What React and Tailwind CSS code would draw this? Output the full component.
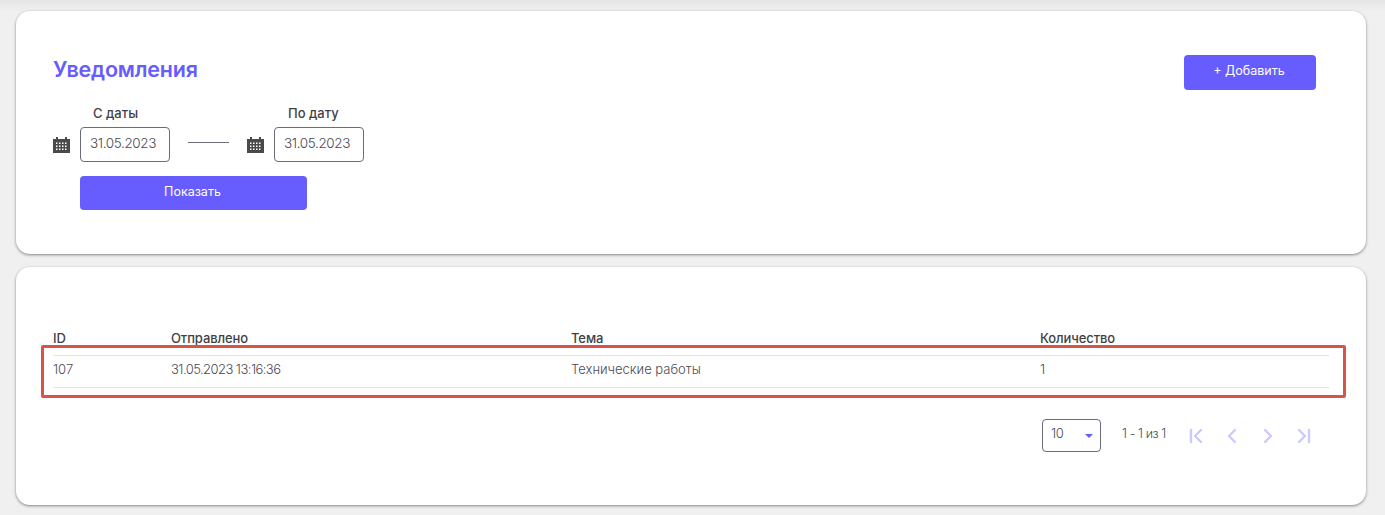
import { ChevronFirst, ChevronLast, ChevronLeft, ChevronRight } from "lucide-react";

const font = { fontFamily: '"Inter", "Noto Sans", sans-serif' };

function CalendarIcon() {
  return (
    <svg width="17" height="16" viewBox="0 0 17 16" className="shrink-0">
      <path fill="#4a4a4a" d="M0 2h3V0h2v2h7V0h2v2h3v14H0z" />
      <g fill="#fff">
        {[5.5, 8.5, 11.5].map((y) =>
          [3, 6, 9, 12].map((x) => <rect key={`${x}-${y}`} x={x} y={y} width="1.5" height="1.5" />)
        )}
      </g>
    </svg>
  );
}

function DateField({ label, labelClass }) {
  return (
    <div className="flex flex-col">
      <div className={`h-[21px] text-[13px] font-medium leading-[14px] text-[#3f3f46] ${labelClass}`}>{label}</div>
      <div className="flex h-[35px] w-[90px] items-center justify-center rounded-[4px] border border-[#6b6b7b] pb-[2px] pr-[4px] text-[13.5px] font-light tracking-[-0.4px] text-[#4a4a55]">
        31.05.2023
      </div>
    </div>
  );
}

export default function App() {
  return (
    <div style={font} className="relative flex h-[515px] flex-col gap-[13px] overflow-hidden bg-[#f0f0f0] bg-gradient-to-b from-[#e6e6e6] to-[#f0f0f0] to-[12px] pl-[16px] pr-[19px] pt-[11px]">
      {/* Filter card */}
      <div className="flex h-[243px] shrink-0 items-start justify-between rounded-[14px] bg-white pl-[37px] pr-[50px] pt-[44px] shadow-[0_1px_3px_rgba(0,0,0,0.45)]">
        <div>
          <h1 className="text-[21.5px] font-semibold leading-[28px] tracking-[-0.2px] text-[#675dff]">Уведомления</h1>
          <div className="mt-[23px] flex items-end">
            <div className="flex h-[35px] w-[27px] items-center"><CalendarIcon /></div>
            <DateField label="С даты" labelClass="pl-[13px]" />
            <div className="mx-[18px] mb-[19px] h-px w-[41px] bg-[#6b6b7b]" />
            <div className="flex h-[35px] w-[27px] items-center"><CalendarIcon /></div>
            <DateField label="По дату" labelClass="pl-[14px]" />
          </div>
          <button className="ml-[27px] mt-[14px] block h-[34px] w-[227px] rounded-[4px] bg-[#675dff] pb-[2px] pr-[2px] text-[12.5px] text-white">Показать</button>
        </div>
        <button className="h-[35px] w-[132px] rounded-[4px] bg-[#675dff] pb-[2px] pr-[2px] text-[12.5px] text-white">+ Добавить</button>
      </div>

      {/* Table card */}
      <div className="relative h-[238px] shrink-0 rounded-[14px] bg-white pl-[37px] pr-[37px] pt-[63px] shadow-[0_1px_3px_rgba(0,0,0,0.45)]">
        <div className="grid h-[26px] grid-cols-[118px_400px_469px_1fr] items-start border-b border-[#e2e2e2] text-[13px] font-medium leading-[16px] tracking-[-0.1px] text-[#3f3f46]">
          <div>ID</div>
          <div>Отправлено</div>
          <div>Тема</div>
          <div>Количество</div>
        </div>
        <div className="grid h-[32px] grid-cols-[118px_400px_469px_1fr] items-start border-b border-[#e2e2e2] pt-[5px] text-[13px] font-light leading-[16px] text-[#4a4a55]">
          <div>107</div>
          <div className="tracking-[-0.55px]">31.05.2023 13:16:36</div>
          <div>Технические работы</div>
          <div>1</div>
        </div>

        <div className="mt-[31px] flex items-center pr-[7px]">
          <div className="ml-auto flex h-[33px] w-[59px] items-center justify-between rounded-[4px] border border-[#6b6b7b] pb-[3px] pl-[8px] pr-[7px] text-[13px] font-light tracking-[-0.4px] text-[#4a4a55]">
            10
            <span className="mt-[3px] h-0 w-0 border-x-[4px] border-t-[4px] border-x-transparent border-t-[#675dff]" />
          </div>
          <div className="ml-[21px] w-[56px] pb-[3px] text-[12.5px] font-light tracking-[-0.4px] text-[#4a4a55]">1 - 1 из 1</div>
          <div className="flex text-[#ccc9ff]">
            <div className="flex w-[36px] justify-center"><ChevronFirst size={24} strokeWidth={2.4} /></div>
            <div className="flex w-[36px] justify-center"><ChevronLeft size={24} strokeWidth={2.4} /></div>
            <div className="flex w-[36px] justify-center"><ChevronRight size={24} strokeWidth={2.4} /></div>
            <div className="flex w-[36px] justify-center"><ChevronLast size={24} strokeWidth={2.4} /></div>
          </div>
        </div>

        {/* Red highlight drawn over the row */}
        <div className="absolute left-[25px] top-[78px] h-[53px] w-[1305px] rounded-[2px] border-[3px] border-[#d9534a]" />
      </div>
    </div>
  );
}
